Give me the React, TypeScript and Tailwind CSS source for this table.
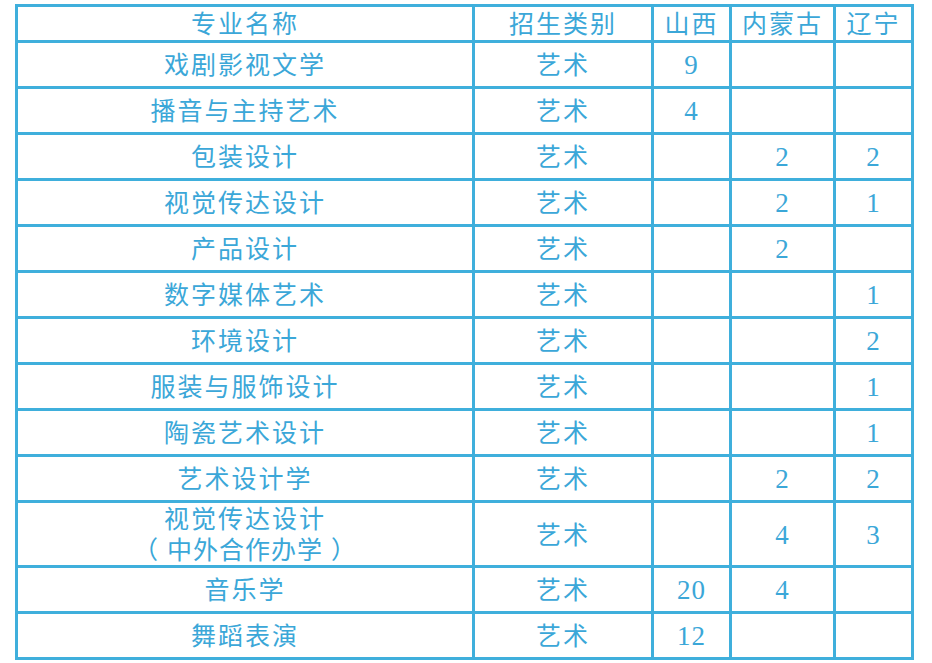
import React from "react";

type Row = { name: React.ReactNode[]; cat: string; sx: string; nm: string; ln: string; tall?: boolean };

const rows: Row[] = [
  { name: ["戏剧影视文学"], cat: "艺术", sx: "9", nm: "", ln: "" },
  { name: ["播音与主持艺术"], cat: "艺术", sx: "4", nm: "", ln: "" },
  { name: ["包装设计"], cat: "艺术", sx: "", nm: "2", ln: "2" },
  { name: ["视觉传达设计"], cat: "艺术", sx: "", nm: "2", ln: "1" },
  { name: ["产品设计"], cat: "艺术", sx: "", nm: "2", ln: "" },
  { name: ["数字媒体艺术"], cat: "艺术", sx: "", nm: "", ln: "1" },
  { name: ["环境设计"], cat: "艺术", sx: "", nm: "", ln: "2" },
  { name: ["服装与服饰设计"], cat: "艺术", sx: "", nm: "", ln: "1" },
  { name: ["陶瓷艺术设计"], cat: "艺术", sx: "", nm: "", ln: "1" },
  { name: ["艺术设计学"], cat: "艺术", sx: "", nm: "2", ln: "2" },
  {
    name: [
      "视觉传达设计",
      <>
        <span className="mr-[8px]">（</span>中外合作办学<span className="ml-[8px]">）</span>
      </>,
    ],
    cat: "艺术",
    sx: "",
    nm: "4",
    ln: "3",
    tall: true,
  },
  { name: ["音乐学"], cat: "艺术", sx: "20", nm: "4", ln: "" },
  { name: ["舞蹈表演"], cat: "艺术", sx: "12", nm: "", ln: "" },
];

const font = {
  fontFamily: '"Liberation Serif", "Noto Sans CJK SC", serif',
};

function Cell({ children, h }: { children?: React.ReactNode; h: string }) {
  return (
    <div className={`bg-white flex flex-col items-center justify-center text-[#3ba7d8] text-[25px] leading-[31px] tracking-[2px] pt-[2px] ${h}`}>
      {children}
    </div>
  );
}

function Num({ v }: { v: string }) {
  return <span className="text-[27px] tracking-[1px]">{v}</span>;
}

export default function App() {
  return (
    <div className="w-[932px] h-[663px] bg-white pl-[15px] pt-[4px]" style={font}>
      <div className="w-[899px] grid grid-cols-[454px_176px_75px_101px_75px] gap-[3px] p-[3px] bg-[#3fafdc]">
        <Cell h="h-[33px]">专业名称</Cell>
        <Cell h="h-[33px]">招生类别</Cell>
        <Cell h="h-[33px]">山西</Cell>
        <Cell h="h-[33px]">内蒙古</Cell>
        <Cell h="h-[33px]">辽宁</Cell>
        {rows.map((r, i) => {
          const h = r.tall ? "h-[62px]" : "h-[43px]";
          return (
            <React.Fragment key={i}>
              <Cell h={h}>
                {r.name.map((n, j) => (
                  <span key={j} className={j === 1 ? "tracking-[1px]" : ""}>{n}</span>
                ))}
              </Cell>
              <Cell h={h}>{r.cat}</Cell>
              <Cell h={h}>{r.sx && <Num v={r.sx} />}</Cell>
              <Cell h={h}>{r.nm && <Num v={r.nm} />}</Cell>
              <Cell h={h}>{r.ln && <Num v={r.ln} />}</Cell>
            </React.Fragment>
          );
        })}
      </div>
    </div>
  );
}
